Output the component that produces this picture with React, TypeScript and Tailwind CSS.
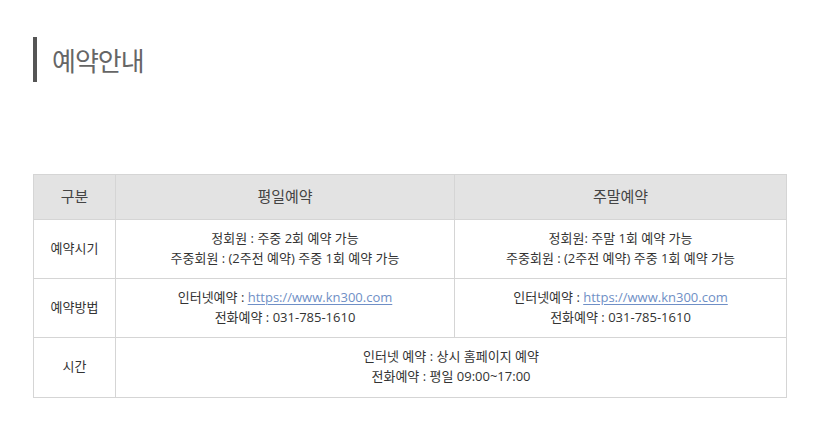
export default function App() {
  const cell = "border border-[#d5d5d5] text-center align-middle";
  const body = "border border-[#d5d5d5] text-center align-middle pb-[3px]";
  const link = "text-[#6f8fc6] underline underline-offset-2";
  return (
    <div
      className="w-[830px] h-[448px] bg-white px-[33px] pt-[37px] text-[#333]"
      style={{ fontFamily: '"Open Sans", "Noto Sans CJK KR", sans-serif' }}
    >
      <div className="flex items-center h-[45px] border-l-[4px] border-[#555] pl-[15px]">
        <h2 className="text-[26px] text-[#666] tracking-[-1px] leading-none" style={{ fontFamily: '"Noto Sans CJK KR", sans-serif' }}>
          예약안내
        </h2>
      </div>

      <table className="mt-[92px] w-[754px] border-collapse text-[13px] leading-[20px] table-fixed">
        <colgroup>
          <col className="w-[82px]" />
          <col className="w-[339px]" />
          <col />
        </colgroup>
        <thead>
          <tr className="h-[45px] bg-[#e3e3e3] text-[15px] text-[#444]">
            <th className={`${cell} font-normal pb-[2px]`}>구분</th>
            <th className={`${cell} font-normal pb-[2px]`}>평일예약</th>
            <th className={`${cell} font-normal pb-[2px]`}>주말예약</th>
          </tr>
        </thead>
        <tbody>
          <tr className="h-[59px]">
            <td className={body}>예약시기</td>
            <td className={body}>
              <p>정회원 : 주중 2회 예약 가능</p>
              <p>주중회원 : (2주전 예약) 주중 1회 예약 가능</p>
            </td>
            <td className={body}>
              <p>정회원: 주말 1회 예약 가능</p>
              <p>주중회원 : (2주전 예약) 주중 1회 예약 가능</p>
            </td>
          </tr>
          <tr className="h-[59px]">
            <td className={body}>예약방법</td>
            <td className={body}>
              <p>
                인터넷예약 : <a className={link}>https://www.kn300.com</a>
              </p>
              <p>전화예약 : 031-785-1610</p>
            </td>
            <td className={body}>
              <p>
                인터넷예약 : <a className={link}>https://www.kn300.com</a>
              </p>
              <p>전화예약 : 031-785-1610</p>
            </td>
          </tr>
          <tr className="h-[60px]">
            <td className={body}>시간</td>
            <td className={body} colSpan={2}>
              <p>인터넷 예약 : 상시 홈페이지 예약</p>
              <p>전화예약 : 평일 09:00~17:00</p>
            </td>
          </tr>
        </tbody>
      </table>
    </div>
  );
}
